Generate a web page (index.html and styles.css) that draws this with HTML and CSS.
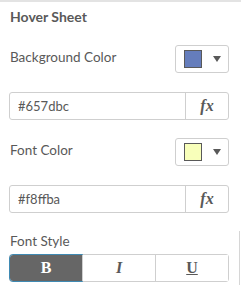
FILE: index.html
```html
<!DOCTYPE html>
<html lang="en">
<head>
  <meta charset="UTF-8" />
  <title>Hover Sheet</title>
  <link rel="stylesheet" href="styles.css">
</head>
<body>
  <div class="panel">
    <h3 class="title">Hover Sheet</h3>

    <div class="row">
      <span class="label">Background Color</span>
      <button class="picker">
        <span class="swatch" style="background:#657dbc"></span>
        <span class="caret"></span>
      </button>
    </div>
    <div class="field">
      <input class="field-input" type="text" value="#657dbc" />
      <span class="fx">fx</span>
    </div>

    <div class="row">
      <span class="label">Font Color</span>
      <button class="picker">
        <span class="swatch" style="background:#f8ffba"></span>
        <span class="caret"></span>
      </button>
    </div>
    <div class="field">
      <input class="field-input" type="text" value="#f8ffba" />
      <span class="fx">fx</span>
    </div>

    <div class="style-section">
      <div class="label small">Font Style</div>
      <div class="btn-group">
        <button class="style-btn active bold">B</button>
        <button class="style-btn italic">I</button>
        <button class="style-btn under">U</button>
      </div>
    </div>
  </div>
</body>
</html>
```

FILE: styles.css
```css
body {
  margin: 0;
  background: #fff;
  font-family: Lato, "Open Sans", sans-serif;
  color: #595959;
}
.panel {
  width: 241px;
  height: 285px;
  border-top: 2px solid #e3e3e3;
  box-sizing: border-box;
  overflow: hidden;
}
.title {
  margin: 0;
  padding: 6px 10px 0;
  height: 36px;
  box-sizing: border-box;
  font-size: 14px;
  font-weight: bold;
  line-height: 18px;
}
.row {
  display: flex;
  align-items: center;
  justify-content: space-between;
  height: 28px;
  margin: 7px 12px 0 10px;
}
.label {
  font-size: 13.5px;
  line-height: 16px;
  padding-bottom: 4px;
}
.picker {
  display: flex;
  align-items: center;
  width: 54px;
  height: 28px;
  padding: 0 0 0 8px;
  border: 1px solid #cfcfcf;
  border-radius: 3px;
  background: #fff;
  box-sizing: border-box;
}
.swatch {
  width: 18px;
  height: 18px;
  border: 1px solid #595959;
  box-sizing: border-box;
}
.caret {
  margin-left: 11px;
  width: 0;
  height: 0;
  border-left: 4px solid transparent;
  border-right: 4px solid transparent;
  border-top: 6px solid #595959;
}
.field {
  display: flex;
  height: 28px;
  margin: 19px 12px 18px 9px;
  border: 1px solid #cfcfcf;
  border-radius: 3px;
  box-sizing: border-box;
}
.field-input {
  flex: 1;
  min-width: 0;
  border: none;
  padding: 0 0 0 8px;
  font-family: Lato, "Open Sans", sans-serif;
  font-size: 13px;
  color: #595959;
  background: transparent;
  outline: none;
}
.fx {
  width: 42px;
  border-left: 1px solid #cfcfcf;
  display: flex;
  align-items: center;
  justify-content: center;
  font-family: "Liberation Serif", serif;
  font-style: italic;
  font-weight: bold;
  font-size: 16px;
  color: #595959;
}
.style-section {
  margin-top: 11px;
  padding: 2px 10px 4px 9px;
  border-right: 1px solid #d6d6d6;
  width: 240px;
  box-sizing: border-box;
}
.small {
  padding: 0 0 0 1px;
}
.btn-group {
  display: flex;
  margin-top: 5px;
  height: 28px;
  border: 1px solid #cfcfcf;
  border-radius: 3px;
  box-sizing: border-box;
}
.style-btn {
  flex: 1;
  border: none;
  border-left: 1px solid #cfcfcf;
  background: #fff;
  font-family: "Liberation Serif", serif;
  font-size: 16px;
  color: #595959;
  padding: 0;
}
.style-btn:first-child {
  border-left: none;
}
.style-btn.active {
  background: #666;
  color: #fff;
  outline: 1px solid #3f8ab3;
  border-radius: 3px 0 0 3px;
}
.bold { font-weight: bold; }
.italic { font-style: italic; font-weight: bold; }
.under { text-decoration: underline; font-weight: bold; }
```
